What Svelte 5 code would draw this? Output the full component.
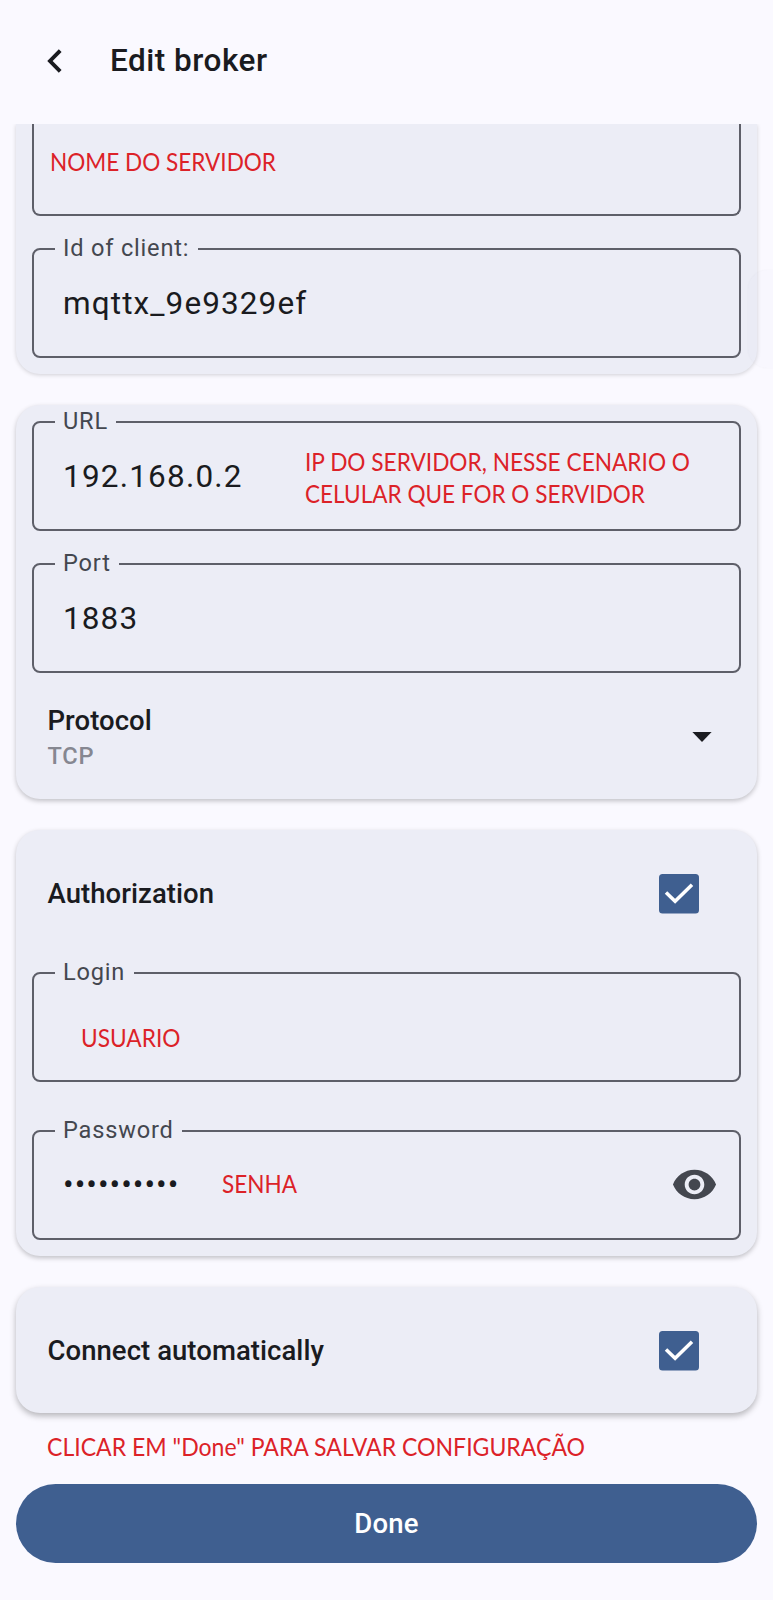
<script>
  const client = 'mqttx_9e9329ef';
  const url = '192.168.0.2';
  const port = '1883';
  const password = '••••••••••';
  let authorization = $state(true);
  let autoConnect = $state(true);
</script>

{#snippet note(lines)}
  <svg class="note" width={lines[0].width} height={lines.length * 32}>
    {#each lines as line, i}
      <text x="-1" y={24 + i * 32} textLength={line.width} lengthAdjust="spacingAndGlyphs">{line.text}</text>
    {/each}
  </svg>
{/snippet}

{#snippet check(on)}
  <svg width="40" height="40" viewBox="0 0 40 40">
    <rect x="0" y="0" width="40" height="39.5" rx="3.5" fill="#3f5f90" />
    {#if on}
      <path d="M7 18.4 16.1 27.3 33 10.7" fill="none" stroke="#fff" stroke-width="3.5" />
    {/if}
  </svg>
{/snippet}

<div class="screen">
  <header>
    <button class="back" aria-label="Back">
      <svg width="16" height="24" viewBox="0 0 16 24">
        <path d="M13.2 1.6 3 12 13.2 22.4" fill="none" stroke="#1a1b20" stroke-width="3.9" />
      </svg>
    </button>
    <h1>Edit broker</h1>
  </header>

  <main>
    <section class="card first">
      <div class="field cut">{@render note([{ text: 'NOME DO SERVIDOR', width: 226 }])}</div>
      <fieldset class="field">
        <legend><span>Id of client:</span></legend>
        <span class="value">{client}</span>
      </fieldset>
      <i class="edge"></i>
    </section>

    <section class="card server">
      <fieldset class="field">
        <legend><span>URL</span></legend>
        <span class="value url">{url}</span>
        {@render note([
          { text: 'IP DO SERVIDOR, NESSE CENARIO O', width: 385 },
          { text: 'CELULAR QUE FOR O SERVIDOR', width: 340 }
        ])}
      </fieldset>
      <fieldset class="field">
        <legend><span>Port</span></legend>
        <span class="value">{port}</span>
      </fieldset>
      <div class="protocol">
        <div>
          <div class="title">Protocol</div>
          <div class="sub">TCP</div>
        </div>
        <svg width="20" height="11" viewBox="0 0 20 11"><path d="M.4 0h19.2L10 9.9z" fill="#1a1b20" /></svg>
      </div>
    </section>

    <section class="card auth">
      <div class="row">
        <span class="title">Authorization</span>
        <button aria-label="Authorization" onclick={() => (authorization = !authorization)}>{@render check(authorization)}</button>
      </div>
      <fieldset class="field login">
        <legend><span>Login</span></legend>
        {@render note([{ text: 'USUARIO', width: 99.5 }])}
      </fieldset>
      <fieldset class="field password">
        <legend><span>Password</span></legend>
        <span class="value dots">{password}</span>
        {@render note([{ text: 'SENHA', width: 75 }])}
        <svg class="eye" width="47" height="47" viewBox="0 0 24 24">
          <path fill="#44474f" d="M12 4.5C7 4.5 2.73 7.61 1 12c1.73 4.39 6 7.5 11 7.5s9.27-3.11 11-7.5c-1.73-4.39-6-7.5-11-7.5zM12 17c-2.76 0-5-2.24-5-5s2.24-5 5-5 5 2.24 5 5-2.24 5-5 5zm0-8c-1.66 0-3 1.34-3 3s1.34 3 3 3 3-1.34 3-3-1.34-3-3-3z" />
        </svg>
      </fieldset>
    </section>

    <section class="card auto">
      <div class="row">
        <span class="title">Connect automatically</span>
        <button aria-label="Connect automatically" onclick={() => (autoConnect = !autoConnect)}>{@render check(autoConnect)}</button>
      </div>
    </section>

    <div class="hint">{@render note([{ text: 'CLICAR EM "Done" PARA SALVAR CONFIGURAÇÃO', width: 538 }])}</div>
    <button class="done">Done</button>
  </main>
</div>

<style>
  :global(body) {
    margin: 0;
    background: #faf9ff;
  }
  .screen {
    width: 773px;
    height: 1600px;
    overflow: hidden;
    background: #faf9ff;
    color: #1a1b20;
    font-family: Roboto, sans-serif;
  }
  button {
    padding: 0;
    border: 0;
    background: none;
    font: inherit;
    display: block;
  }
  svg {
    display: block;
    flex: none;
  }
  header {
    height: 124px;
    box-sizing: border-box;
    padding: 0 0 2px 46.5px;
    display: flex;
    align-items: center;
  }
  h1 {
    margin: 0 0 0 47.5px;
    font-size: 31.5px;
    font-weight: 500;
    letter-spacing: 0.5px;
    line-height: 40px;
  }
  main {
    height: 1476px;
    overflow: hidden;
    box-sizing: border-box;
    padding: 0 16px;
    display: flex;
    flex-direction: column;
  }
  .card {
    box-sizing: border-box;
    flex: none;
    padding: 0 16px 0 15.5px;
    border-radius: 24px;
    background: #ecedf6;
    box-shadow: 0 2px 5px rgba(0, 0, 0, 0.23);
  }
  .first {
    position: relative;
    height: 250px;
    border-radius: 0 0 24px 24px;
    box-shadow: 0 1px 4px rgba(0, 0, 0, 0.17);
  }
  .edge {
    position: absolute;
    left: 732px;
    top: 146px;
    width: 25px;
    height: 98px;
    border-radius: 20px 0 0 20px;
    background: rgba(90, 90, 130, 0.01);
    box-shadow: 0 0 2px rgba(90, 90, 110, 0.06);
  }
  .field {
    box-sizing: border-box;
    height: 110px;
    min-width: 0;
    margin: 0;
    padding: 1px 21px 0 29.5px;
    border: 2px solid #5e5f69;
    border-radius: 8px;
    display: flex;
    align-items: center;
  }
  .cut {
    height: 92px;
    border-top: 0;
    border-radius: 0 0 8px 8px;
    padding: 0 0 12px 17px;
    margin-bottom: 32px;
  }
  legend {
    height: 2px;
    margin-left: -8.5px;
    padding: 0 8.5px 0 8.5px;
    font-size: 23.6px;
    line-height: 2px;
    letter-spacing: 0.8px;
    color: #44474f;
  }
  legend span {
    display: block;
    transform: translateY(-1.5px);
  }
  .value {
    font-size: 31.5px;
    line-height: 40px;
    letter-spacing: 1.1px;
    white-space: nowrap;
  }
  .server {
    height: 394px;
    margin-top: 31px;
    padding-top: 16px;
  }
  .server .field + .field {
    margin-top: 32px;
  }
  .server .note {
    margin-top: 5px;
  }
  .url {
    width: 242.5px;
    letter-spacing: 1.2px;
  }
  .protocol {
    display: flex;
    justify-content: space-between;
    align-items: center;
    padding: 0 29px 0 16px;
    margin-top: 30px;
    height: 69px;
  }
  .title {
    font-size: 27.5px;
    font-weight: 500;
    letter-spacing: 0.05px;
    line-height: 36px;
  }
  .sub {
    font-size: 23.6px;
    font-weight: 500;
    letter-spacing: 0.8px;
    line-height: 34px;
    color: #868791;
  }
  .auth {
    height: 426px;
    margin-top: 31px;
  }
  .row {
    height: 128px;
    display: flex;
    align-items: center;
    justify-content: space-between;
    padding: 0 42px 0 16px;
  }
  .login {
    margin-top: 14px;
  }
  .login .note {
    margin: 23px 0 0 18.5px;
  }
  .password {
    margin-top: 48px;
    padding-top: 0;
    padding-bottom: 1px;
  }
  .dots {
    width: 159.5px;
    letter-spacing: 1px;
  }
  .eye {
    margin-left: auto;
  }
  .auto {
    height: 126px;
    margin-top: 31px;
    box-shadow: 0 3px 6px rgba(0, 0, 0, 0.28);
  }
  .hint {
    padding: 19px 0 20px 32px;
  }
  .note {
    overflow: visible;
    font-family: Lato, sans-serif;
    font-size: 24.4px;
    fill: #dc2228;
  }
  .done {
    flex: none;
    height: 79px;
    border-radius: 40px;
    background: #3f5f90;
    color: #fff;
    font-size: 27.5px;
    font-weight: 500;
    letter-spacing: 0.2px;
    text-align: center;
  }
</style>
